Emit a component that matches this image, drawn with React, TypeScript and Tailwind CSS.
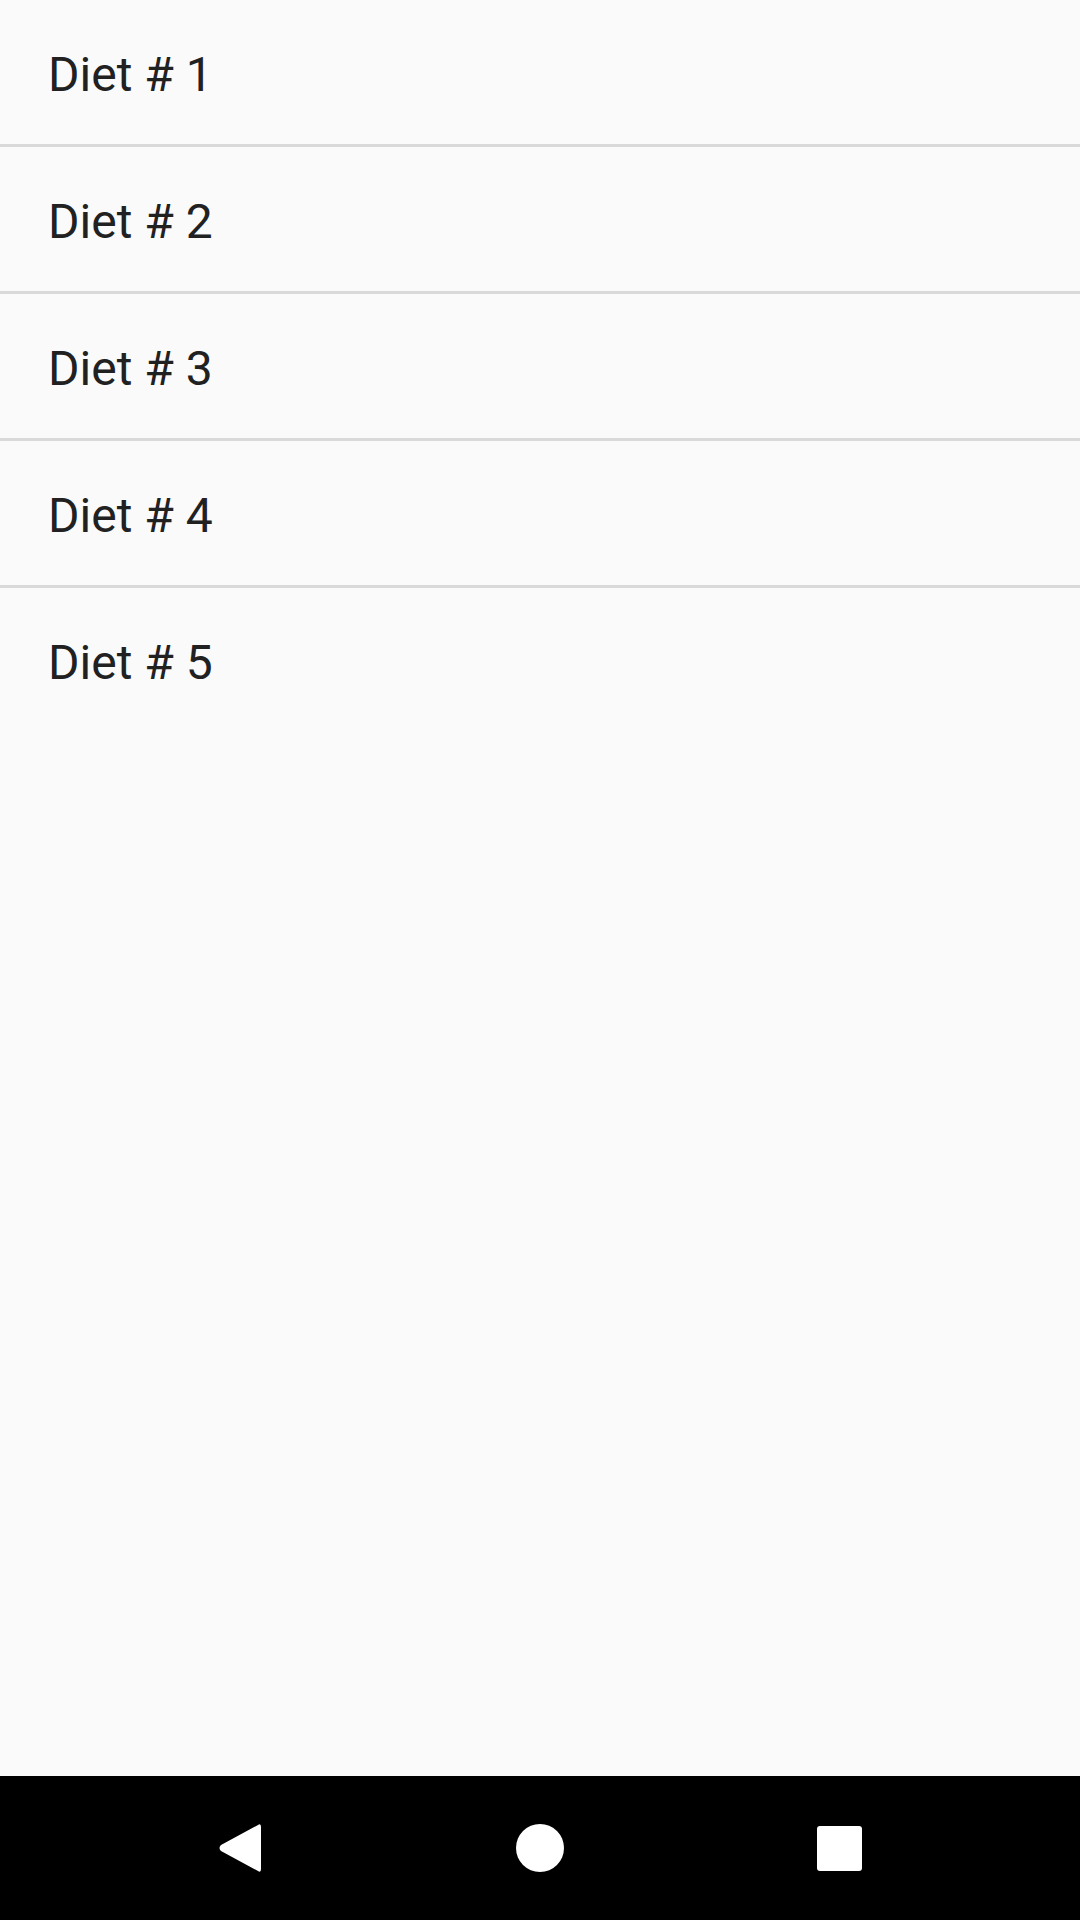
import React from "react";

export default function App() {
  const items = [1, 2, 3, 4, 5];
  return (
    <div className="w-[1080px] h-[1920px] flex flex-col bg-[#fafafa]" style={{ fontFamily: "Roboto, 'Noto Sans', sans-serif" }}>
      <div className="flex-1 flex flex-col">
        {items.map((n, i) => (
          <div key={n} className="flex flex-col">
            <div className="h-[144px] flex items-center pl-[48px] pt-[5px] text-[48px] text-[#212121] leading-none">
              Diet # {n}
            </div>
            {i < items.length - 1 && <div className="h-[3px] bg-[#d9d9d9]" />}
          </div>
        ))}
      </div>
      <div className="h-[144px] bg-black flex items-center justify-center relative">
        <div className="flex items-center justify-between w-[644px]">
          <svg width="44" height="50" viewBox="0 0 44 50">
            <path d="M40 2 Q43 0 43 4 L43 46 Q43 50 40 48 L3 28 Q0 25 3 22 Z" fill="white" />
          </svg>
          <div className="w-[48px] h-[48px] rounded-full bg-white" />
          <div className="w-[45px] h-[45px] rounded-[3px] bg-white" />
        </div>
      </div>
    </div>
  );
}
